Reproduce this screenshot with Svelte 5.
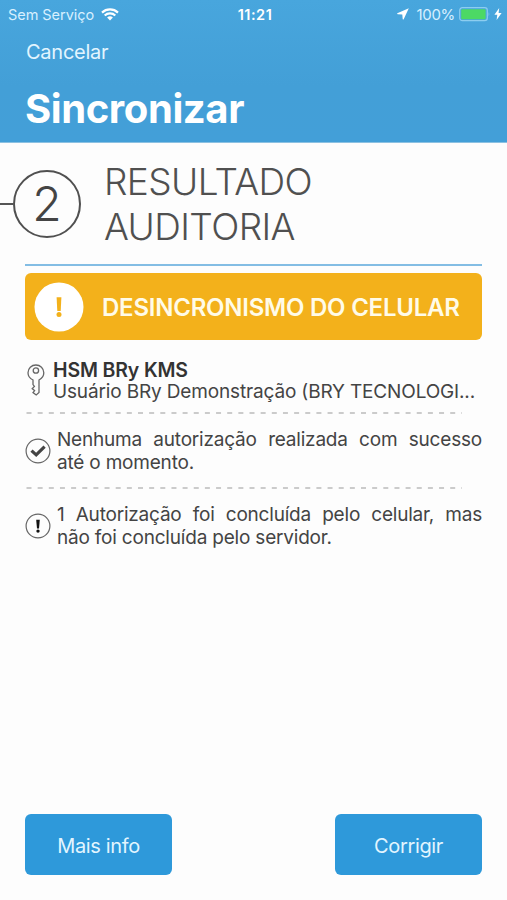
<script>
  let step = 2;
  let account = {
    name: 'HSM BRy KMS',
    user: 'Usuário BRy Demonstração (BRY TECNOLOGI...'
  };
  let results = [
    { type: 'success', lines: ['Nenhuma autorização realizada com sucesso', 'até o momento.'] },
    { type: 'warning', lines: ['1 Autorização foi concluída pelo celular, mas', 'não foi concluída pelo servidor.'] }
  ];
</script>

<div class="screen">
  <header>
    <div class="status-bar">
      <div class="status-left">
        <span class="carrier">Sem Serviço</span>
        <svg class="wifi" width="18" height="13" viewBox="0 0 18 13">
          <path d="M1 4.6 A11.8 11.8 0 0 1 17 4.6" />
          <path d="M3.7 7.5 A7.8 7.8 0 0 1 14.3 7.5" />
          <path class="dot" d="M9 12.5 L6.1 9.6 A4.2 4.2 0 0 1 11.9 9.6 Z" />
        </svg>
      </div>
      <span class="time">11:21</span>
      <div class="status-right">
        <svg width="12" height="12" viewBox="0 0 12 12">
          <path d="M11.8 0.2 L0.3 5.2 Q-0.2 6 0.8 6.3 L5.3 6.6 L5.7 11 Q6 12 6.7 11.2 Z" fill="#fff" />
        </svg>
        <span class="percent">100%</span>
        <svg class="battery" width="32" height="15" viewBox="0 0 32 15">
          <rect x="0.7" y="0.7" width="27.6" height="13" rx="2.6" fill="none" stroke="#8dcdf0" stroke-width="1.2" />
          <rect x="2.2" y="2.2" width="24.4" height="10" rx="1" fill="#4cd964" />
          <path d="M29.6 5 Q31.2 7.2 29.6 9.4 Z" fill="#8dcdf0" />
        </svg>
        <svg class="bolt" width="8" height="12" viewBox="0 0 8 12">
          <path d="M5.2 0 L0.4 6.8 H3.3 L2.6 12 L7.6 5 H4.6 Z" fill="#fff" />
        </svg>
      </div>
    </div>
    <a class="cancel" href="#cancelar">Cancelar</a>
    <h1>Sincronizar</h1>
  </header>

  <main>
    <div class="step">
      <span class="step-line"></span>
      <span class="step-number">{step}</span>
      <h2>RESULTADO<br />AUDITORIA</h2>
    </div>

    <div class="banner">
      <svg width="50" height="50" viewBox="0 0 50 50">
        <circle cx="25" cy="25" r="24.5" fill="#fff" />
        <path d="M22.6 15.3 H27.4 L26.7 29 H23.3 Z" fill="#f3b11b" />
        <circle cx="25" cy="32.4" r="2.5" fill="#f3b11b" />
      </svg>
      <span>DESINCRONISMO DO CELULAR</span>
    </div>

    <div class="account">
      <svg width="18" height="32" viewBox="0 0 18 32">
        <path d="M6 16 C3 14.6 1 12 1 8.8 C1 4.5 4.5 1 8.9 1 C13.3 1 16.8 4.5 16.8 8.8 C16.8 12 14.8 14.6 12 16 V28.5 L9.2 31 L6 28.6 L7.6 26.6 L5.2 24.6 L7.4 22.4 L6 20.6 Z" />
        <circle cx="8.9" cy="6.5" r="2.7" />
      </svg>
      <div class="account-text">
        <strong>{account.name}</strong>
        <span>{account.user}</span>
      </div>
    </div>

    {#each results as result}
      <svg class="divider" width="440" height="2" viewBox="0 0 440 2">
        <path d="M1.5 1 H437" />
      </svg>
      <div class="result-row">
        <svg width="26" height="26" viewBox="0 0 26 26">
          <circle class="ring" cx="13" cy="13" r="11.9" />
          {#if result.type === 'success'}
            <path class="check" d="M6.5 12.6 L11.2 16.9 L19.6 8.7" />
          {:else}
            <path d="M11.2 6.8 H14.8 L14 15.4 H12 Z" fill="#111" />
            <circle cx="13" cy="18.1" r="1.7" fill="#111" />
          {/if}
        </svg>
        <div class="result-text">
          <p class="justified">{result.lines[0]}</p>
          <p>{result.lines[1]}</p>
        </div>
      </div>
    {/each}
  </main>

  <footer>
    <button>Mais info</button>
    <button>Corrigir</button>
  </footer>
</div>

<style>
  :global(body) {
    margin: 0;
    background: #fdfdfd;
  }

  .screen {
    display: flex;
    flex-direction: column;
    width: 507px;
    height: 900px;
    background: #fdfdfd;
    color: #444;
    font-family: Inter, 'Liberation Sans', sans-serif;
    overflow: hidden;
  }

  header {
    height: 143px;
    box-sizing: border-box;
    background: linear-gradient(#48a6dd, #439fd7 60%, #439fd8);
    border-bottom: 1px solid #8cc1e2;
    color: #fff;
  }

  .status-bar {
    display: grid;
    grid-template-columns: 1fr auto 1fr;
    align-items: center;
    height: 28px;
    padding: 0 5px 0 8px;
    font-size: 15px;
  }

  .status-left,
  .status-right {
    display: flex;
    align-items: center;
  }

  .status-right {
    justify-content: flex-end;
  }

  .carrier {
    color: #d8f0ff;
    font-size: 14.5px;
    letter-spacing: -0.05px;
  }

  .wifi {
    margin-left: 7px;
    fill: none;
    stroke: #fff;
    stroke-width: 2.2;
  }

  .wifi .dot {
    fill: #fff;
    stroke: none;
  }

  .time {
    font-weight: 600;
    font-size: 14.5px;
    letter-spacing: 0.5px;
  }

  .percent {
    margin-left: 7px;
    color: #d8f0ff;
    letter-spacing: -0.3px;
  }

  .battery {
    margin-left: 4px;
  }

  .bolt {
    margin-left: 3px;
  }

  .cancel {
    display: block;
    margin: 12px 0 0 26px;
    color: #e2f5ff;
    font-size: 20px;
    line-height: 24px;
    letter-spacing: -0.25px;
    text-decoration: none;
  }

  h1 {
    margin: 21px 0 0 25px;
    font-size: 40px;
    font-weight: 700;
    line-height: 48px;
    letter-spacing: -0.4px;
  }

  main {
    flex: 1;
    padding: 0 25px;
  }

  .step {
    display: flex;
    align-items: center;
    height: 121px;
    border-bottom: 2px solid #83bde4;
  }

  .step-line {
    width: 14px;
    height: 2px;
    margin-left: -26px;
    background: #555;
  }

  .step-number {
    display: flex;
    align-items: center;
    justify-content: center;
    box-sizing: border-box;
    width: 68px;
    height: 68px;
    border: 2px solid #505050;
    border-radius: 50%;
    font-size: 48px;
    font-weight: 300;
  }

  h2 {
    margin: 0 0 0 23px;
    color: #505050;
    font-size: 37px;
    font-weight: 300;
    line-height: 45px;
    letter-spacing: -0.6px;
  }

  .banner {
    display: flex;
    align-items: center;
    height: 67px;
    margin-top: 7px;
    padding-left: 9px;
    border-radius: 6px;
    background: #f3b11b;
    color: #fffbe8;
    font-size: 24px;
    font-weight: 600;
    white-space: nowrap;
  }

  .banner span {
    margin: 1px 0 0 18px;
    letter-spacing: -0.23px;
  }

  .account {
    display: flex;
    height: 72px;
    box-sizing: border-box;
    padding-top: 20px;
    white-space: nowrap;
  }

  .account svg {
    flex: none;
    margin: 4px 0 0 2px;
    fill: none;
    stroke: #666;
    stroke-width: 1.3;
  }

  .account-text {
    display: flex;
    flex-direction: column;
    margin-left: 8px;
    font-size: 19px;
    line-height: 21px;
    letter-spacing: -0.15px;
  }

  .account-text strong {
    color: #333;
    font-weight: 600;
    font-size: 19.5px;
  }

  .divider {
    display: block;
    stroke: #bbb;
    stroke-width: 1.4;
    stroke-dasharray: 5 6.15;
  }

  .result-row {
    display: flex;
    height: 73px;
    align-items: center;
  }

  .result-row svg {
    flex: none;
  }

  .ring {
    fill: none;
    stroke: #666;
    stroke-width: 1.2;
  }

  .check {
    fill: none;
    stroke: #444;
    stroke-width: 3.2;
  }

  .result-text {
    width: 425px;
    margin-left: 6px;
    font-size: 19px;
    line-height: 23px;
    letter-spacing: -0.2px;
    white-space: nowrap;
  }

  .result-text p {
    margin: 0;
  }

  .result-text .justified {
    white-space: normal;
    text-align-last: justify;
  }

  footer {
    display: flex;
    justify-content: space-between;
    padding: 0 25px 25px;
  }

  button {
    width: 147px;
    height: 61px;
    padding: 2px 0 0;
    border: none;
    border-radius: 6px;
    background: #2e99da;
    color: #e2f5ff;
    font-family: inherit;
    font-size: 20px;
    letter-spacing: -0.35px;
  }
</style>
